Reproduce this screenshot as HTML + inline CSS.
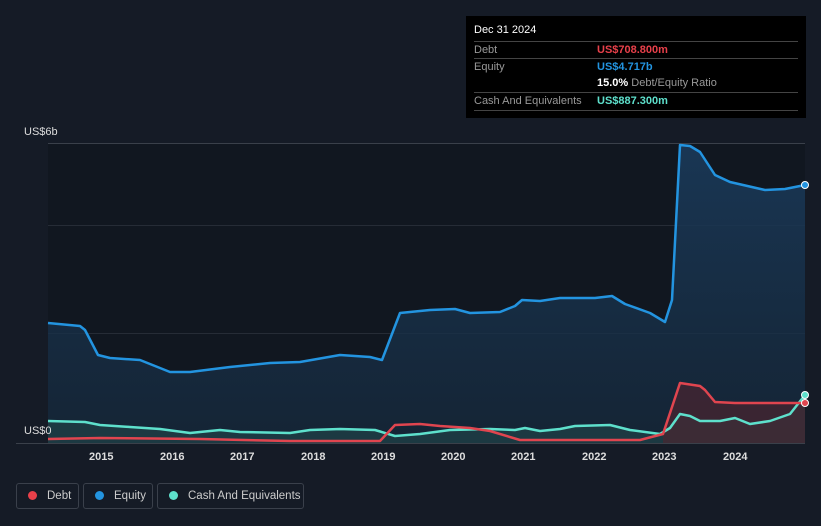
<!DOCTYPE html><html><head><style>
body{margin:0;width:821px;height:526px;background:#151b26;font-family:"Liberation Sans",sans-serif;overflow:hidden;position:relative}
.tt{position:absolute;left:466px;top:16px;width:340px;height:102px;background:#000;color:#fff;font-size:11px}
.r{position:absolute;left:8px;right:8px;height:17px;border-top:1px solid #444;line-height:17px;color:#999}
.lg{position:absolute;top:483px;height:26px;border:1px solid #3a404b;border-radius:3px;color:#ccc;font-size:11.5px;line-height:25px;box-sizing:border-box;white-space:nowrap}
.lg i{display:inline-block;width:9px;height:9px;border-radius:50%;margin:0 10px 0 11px;vertical-align:-1px}
.yr{position:absolute;top:451px;color:#ddd;font-size:11px;font-weight:bold}
</style></head><body>
<svg width="821" height="526" style="position:absolute;left:0;top:0">
<defs><linearGradient id="g" x1="0" y1="0" x2="0" y2="1"><stop offset="0" stop-color="#1a3a5a" stop-opacity=".9"/><stop offset="1" stop-color="#162a3e" stop-opacity=".7"/></linearGradient></defs>
<rect x="48" y="143" width="757" height="300" fill="#111720"/>
<line x1="48" y1="143.5" x2="805" y2="143.5" stroke="#3a404a"/>
<line x1="48" y1="225.5" x2="805" y2="225.5" stroke="#262c36"/>
<line x1="48" y1="333.5" x2="805" y2="333.5" stroke="#262c36"/>
<path d="M48,323 L80,326 85,330 98,355 110,358 140,360 155,366 170,372 190,372 230,367 270,363 300,362 340,355 370,357 382,360 400,313 430,310 455,309 470,313 500,312 515,306 522,300 540,301 560,298 595,298 612,296 625,304 650,313 665,322 672,300 680,145 690,146 700,152 715,175 730,182 765,190 785,189 805,185 L805,443 L48,443Z" fill="url(#g)"/>
<path d="M48,421 L85,422 100,425 130,427 160,429 190,433 220,430 240,432 290,433 310,430 340,429 375,430 395,436 420,434 450,430 490,429 515,430 525,428 540,431 560,429 575,426 610,425 630,430 660,434 670,428 680,414 690,416 700,421 720,421 735,418 750,424 770,421 790,414 805,395 L805,443 L48,443Z" fill="#1e3f46" opacity=".8"/>
<path d="M663,434 L680,383 700,386 705,390 715,402 735,403 780,403 805,403 L805,443 L663,443Z" fill="#4a2530" opacity=".7"/>
<path d="M48,323 L80,326 85,330 98,355 110,358 140,360 155,366 170,372 190,372 230,367 270,363 300,362 340,355 370,357 382,360 400,313 430,310 455,309 470,313 500,312 515,306 522,300 540,301 560,298 595,298 612,296 625,304 650,313 665,322 672,300 680,145 690,146 700,152 715,175 730,182 765,190 785,189 805,185" fill="none" stroke="#2394e0" stroke-width="2.5" stroke-linejoin="round"/>
<path d="M48,421 L85,422 100,425 130,427 160,429 190,433 220,430 240,432 290,433 310,430 340,429 375,430 395,436 420,434 450,430 490,429 515,430 525,428 540,431 560,429 575,426 610,425 630,430 660,434 670,428 680,414 690,416 700,421 720,421 735,418 750,424 770,421 790,414 805,395" fill="none" stroke="#5ee0cc" stroke-width="2.5" stroke-linejoin="round"/>
<path d="M48,439 L100,438 200,439 290,441 380,441 395,425 420,424 440,426 470,428 490,431 520,440 560,440 640,440 663,434 680,383 700,386 705,390 715,402 735,403 780,403 805,403" fill="none" stroke="#e0454f" stroke-width="2.5" stroke-linejoin="round"/>
<line x1="16" y1="443.5" x2="805" y2="443.5" stroke="#3a404a"/>
<circle cx="805" cy="185" r="3.5" fill="#2394e0" stroke="#fff" stroke-width="1"/>
<circle cx="805" cy="395" r="3.5" fill="#5ee0cc" stroke="#fff" stroke-width="1"/>
<circle cx="805" cy="403" r="3.5" fill="#e0454f" stroke="#fff" stroke-width="1"/>
</svg>
<div style="position:absolute;left:24px;top:126px;color:#ddd;font-size:11px">US$6b</div>
<div style="position:absolute;left:24px;top:425px;color:#ddd;font-size:11px">US$0</div>
<div class="yr" style="left:89px">2015</div><div class="yr" style="left:160px">2016</div><div class="yr" style="left:230px">2017</div><div class="yr" style="left:301px">2018</div><div class="yr" style="left:371px">2019</div><div class="yr" style="left:441px">2020</div><div class="yr" style="left:511px">2021</div><div class="yr" style="left:582px">2022</div><div class="yr" style="left:652px">2023</div><div class="yr" style="left:723px">2024</div>
<div class="tt">
<div style="position:absolute;left:8px;top:8px;font-size:11px">Dec 31 2024</div>
<div class="r" style="top:25px">Debt<span style="position:absolute;left:123px;color:#e8404a;font-weight:bold">US$708.800m</span></div>
<div class="r" style="top:42px">Equity<span style="position:absolute;left:123px;color:#2394e0;font-weight:bold">US$4.717b</span></div>
<div class="r" style="top:59px;border:0"><span style="position:absolute;left:123px"><b style="color:#fff">15.0%</b> Debt/Equity Ratio</span></div>
<div class="r" style="top:76px">Cash And Equivalents<span style="position:absolute;left:123px;color:#5ee0cc;font-weight:bold">US$887.300m</span></div>
<div class="r" style="top:94px;height:0"></div>
</div>
<div class="lg" style="left:16px;width:63px"><i style="background:#e8404a"></i>Debt</div>
<div class="lg" style="left:83px;width:70px"><i style="background:#2394e0"></i>Equity</div>
<div class="lg" style="left:157px;width:147px"><i style="background:#5ee0cc"></i>Cash And Equivalents</div>
</body></html>
